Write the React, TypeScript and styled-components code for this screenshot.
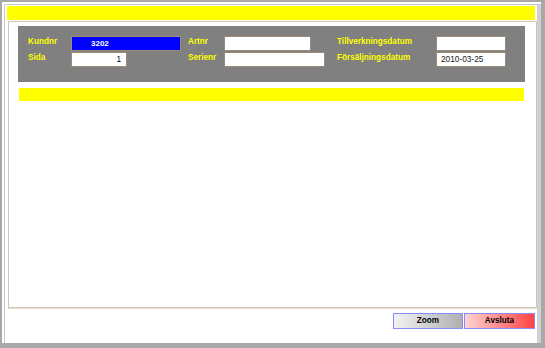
import React from "react";
import styled, { createGlobalStyle } from "styled-components";

const Global = createGlobalStyle`
  html, body { margin: 0; padding: 0; background: #ffffff; }
  body { font-family: "Liberation Sans", Arial, sans-serif; }
  * { box-sizing: border-box; }
`;

const Window = styled.div`
  width: 545px;
  height: 348px;
  background: #ffffff;
  border-style: solid;
  border-color: #a8a8a8;
  border-width: 2px 4px 5px 2px;
  display: flex;
  flex-direction: column;
`;

const Frame = styled.div`
  flex: 1;
  margin: 2px 0 0 2px;
  border-top: 1px solid #c8c8c8;
  border-left: 1px solid #c8c8c8;
  border-right: 4px solid #d0d0d0;
  display: flex;
  flex-direction: column;
`;

const HeaderBar = styled.div`
  height: 14px;
  margin: 1px 2px 0 2px;
  background: #ffff00;
`;

const Panel = styled.div`
  height: 287px;
  margin: 1px 0 0 3px;
  border: 1px solid #d2c7b4;
  box-shadow: 0 1px 0 #e6dfd3;
  padding: 4px 11px 0 9px;
  display: flex;
  flex-direction: column;
`;

const FieldBox = styled.div`
  height: 56px;
  background: #808080;
  padding: 10px 0 0 10px;
  display: grid;
  grid-template-columns: 43px 117px 36px 113px 99px 70px;
  grid-template-rows: 15px 15px;
  row-gap: 1px;
`;

const Label = styled.div`
  color: #ffff00;
  font-size: 8.2px;
  font-weight: bold;
  line-height: 10px;
  padding-top: 1px;
  white-space: nowrap;
`;

const Field = styled.div<{ $w: number; $bg?: string; $color?: string; $align?: string; $bold?: boolean; $pl?: number }>`
  width: ${(p) => p.$w}px;
  height: 15px;
  background: ${(p) => p.$bg || "#ffffff"};
  border: 1px solid #9a8a78;
  color: ${(p) => p.$color || "#000000"};
  font-size: ${(p) => (p.$bold ? "8px" : "8.3px")};
  font-weight: ${(p) => (p.$bold ? "bold" : "normal")};
  line-height: 13px;
  text-align: ${(p) => p.$align || "left"};
  padding: 0 5px 0 ${(p) => (p.$pl ?? 4)}px;
  white-space: nowrap;
  overflow: hidden;
`;

const SubBar = styled.div`
  height: 13px;
  margin: 6px 1px 0 1px;
  background: #ffff00;
`;

const ButtonRow = styled.div`
  margin-top: 5px;
  padding-right: 2px;
  display: flex;
  justify-content: flex-end;
  gap: 1px;
`;

const Button = styled.button<{ $from: string; $to: string; $w: number }>`
  width: ${(p) => p.$w}px;
  height: 16px;
  padding: 0;
  margin: 0;
  border: 1px solid #8a8aff;
  background: linear-gradient(to right, ${(p) => p.$from}, ${(p) => p.$to});
  font-family: "Liberation Sans", Arial, sans-serif;
  font-size: 8.2px;
  font-weight: bold;
  color: #000000;
  line-height: 14px;
  text-align: center;
`;

export default function App() {
  return (
    <>
      <Global />
      <Window>
        <Frame>
          <HeaderBar />
          <Panel>
            <FieldBox>
              <Label>Kundnr</Label>
              <Field $w={110} $bg="#0000ff" $color="#ffffff" $bold $pl={19}>3202</Field>
              <Label>Artnr</Label>
              <Field $w={87} />
              <Label>Tillverkningsdatum</Label>
              <Field $w={70} />
              <Label>Sida</Label>
              <Field $w={56} $align="right">1</Field>
              <Label>Serienr</Label>
              <Field $w={101} />
              <Label>Försäljningsdatum</Label>
              <Field $w={70} $color="#202020">2010-03-25</Field>
            </FieldBox>
            <SubBar />
          </Panel>
          <ButtonRow>
            <Button $w={70} $from="#f2f2f2" $to="#b0b0b0">Zoom</Button>
            <Button $w={71} $from="#ffd4d4" $to="#ff4444">Avsluta</Button>
          </ButtonRow>
        </Frame>
      </Window>
    </>
  );
}
